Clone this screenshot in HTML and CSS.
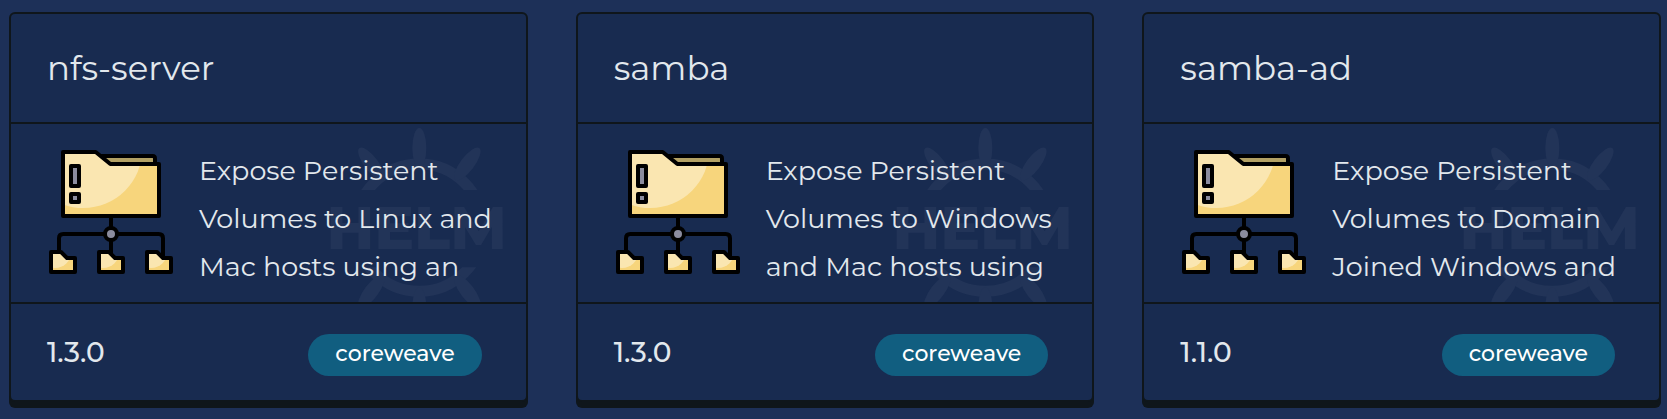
FILE: index.html
```html
<!DOCTYPE html>
<html lang="en">
<head>
<meta charset="utf-8">
<title>Charts</title>
<link rel="stylesheet" href="styles.css">
</head>
<body>
<svg class="defs" aria-hidden="true">
  <defs>
    <clipPath id="front"><path d="M69 51H167L211 87H357V243H69Z"/></clipPath>
    <clipPath id="small-front"><path d="M33 351H63L81 369H105V411H33Z"/></clipPath>
    <symbol id="small-folder" viewBox="27 345 84 72">
      <path d="M33 351H63L81 369H105V411H33Z" fill="#f7d57c"/>
      <ellipse cx="45" cy="353" rx="48" ry="46" fill="#fae6b1" clip-path="url(#small-front)"/>
      <path d="M33 351H63L81 369H105V411H33Z" fill="none" stroke="#000" stroke-width="12" stroke-linejoin="round"/>
    </symbol>
    <symbol id="share" viewBox="27 45 372 372">
      <path d="M175 63H338Q345 63 345 71V90H205Z" fill="#b3a164" stroke="#000" stroke-width="12"/>
      <path d="M69 51H167L211 87H357V243H69Z" fill="#f7d57c"/>
      <circle cx="130" cy="42" r="177" fill="#fae6b1" clip-path="url(#front)"/>
      <path d="M69 51H167L211 87H357V243H69Z" fill="none" stroke="#000" stroke-width="12" stroke-linejoin="round"/>
      <path d="M93 93H117V153H93ZM93 177H117V201H93Z" fill="#8b8c9e" stroke="#000" stroke-width="12" stroke-linejoin="round"/>
      <path d="M213 243V360M57 350V310Q57 297 70 297H356Q369 297 369 310V365" fill="none" stroke="#000" stroke-width="12"/>
      <circle cx="213" cy="297" r="18" fill="#8b8c9e" stroke="#000" stroke-width="12"/>
      <use href="#small-folder" x="27" y="345" width="84" height="72"/>
      <use href="#small-folder" x="171" y="345" width="84" height="72"/>
      <use href="#small-folder" x="315" y="345" width="84" height="72"/>
    </symbol>
    <clipPath id="rim"><path d="M0 0H720V225H0ZM0 457H720V700H0Z"/></clipPath>
    <symbol id="helm" viewBox="78 27 540 534">
      <g clip-path="url(#rim)">
        <circle cx="358" cy="338" r="191" fill="none" stroke="#223458" stroke-width="33"/>
        <g fill="#223458">
          <ellipse cx="358" cy="99" rx="21" ry="60"/>
          <ellipse cx="358" cy="99" rx="21" ry="60" transform="rotate(37 358 338)"/>
          <ellipse cx="358" cy="99" rx="21" ry="60" transform="rotate(-37 358 338)"/>
          <ellipse cx="358" cy="99" rx="21" ry="60" transform="rotate(143 358 338)"/>
          <ellipse cx="358" cy="99" rx="21" ry="60" transform="rotate(-143 358 338)"/>
          <ellipse cx="358" cy="99" rx="21" ry="60" transform="rotate(180 358 338)"/>
        </g>
      </g>
      <text class="helm-word" x="350" y="403" text-anchor="middle">HELM</text>
    </symbol>
  </defs>
</svg>
<main class="charts">
  <article class="card">
    <h2 class="card-title">nfs-server</h2>
    <div class="card-body">
      <svg class="watermark" aria-hidden="true"><use href="#helm"/></svg>
      <svg class="icon" aria-hidden="true"><use href="#share"/></svg>
      <p class="description">Expose Persistent Volumes to Linux and Mac hosts using an</p>
    </div>
    <footer class="card-footer"><span class="version">1.3.0</span><span class="badge">coreweave</span></footer>
  </article>
  <article class="card">
    <h2 class="card-title">samba</h2>
    <div class="card-body">
      <svg class="watermark" aria-hidden="true"><use href="#helm"/></svg>
      <svg class="icon" aria-hidden="true"><use href="#share"/></svg>
      <p class="description">Expose Persistent Volumes to Windows and Mac hosts using</p>
    </div>
    <footer class="card-footer"><span class="version">1.3.0</span><span class="badge">coreweave</span></footer>
  </article>
  <article class="card">
    <h2 class="card-title">samba-ad</h2>
    <div class="card-body">
      <svg class="watermark" aria-hidden="true"><use href="#helm"/></svg>
      <svg class="icon" aria-hidden="true"><use href="#share"/></svg>
      <p class="description">Expose Persistent Volumes to Domain Joined Windows and</p>
    </div>
    <footer class="card-footer"><span class="version">1.1.0</span><span class="badge">coreweave</span></footer>
  </article>
</main>
</body>
</html>
```
FILE: styles.css
```css
* { box-sizing: border-box; }
body {
  margin: 0;
  background: #1d3058;
  color: #e2e8ed;
  font-family: Metropolis, Montserrat, Inter, sans-serif;
}
.defs { position: absolute; width: 0; height: 0; }
.charts {
  display: grid;
  grid-template-columns: repeat(3, minmax(0, 1fr));
  gap: 48px;
  padding: 12px 6px 11px 9px;
}
.card {
  background: #182b50;
  border: 2px solid #0f161b;
  border-radius: 6px;
  box-shadow: 0 6px 0 #0f161b;
}
.card-title {
  margin: 0;
  padding: 30px 36px;
  font-size: 34px;
  line-height: 48px;
  font-weight: 400;
}
.card-body {
  position: relative;
  display: flex;
  gap: 24px;
  padding: 23px 24px 11px 36px;
  border-top: 2px solid #0f161b;
  border-bottom: 2px solid #0f161b;
}
.watermark {
  position: absolute;
  top: 0;
  right: 20px;
  width: 180px;
  height: 178px;
}
.helm-word { fill: #223458; font-size: 178px; font-weight: 800; }
.icon {
  flex: none;
  width: 128px;
  height: 124px;
  margin-top: 3px;
}
.description {
  position: relative;
  margin: 0;
  font-size: 27px;
  line-height: 48px;
}
.card-footer {
  display: flex;
  align-items: flex-start;
  justify-content: space-between;
  padding: 30px 44px 24px 36px;
}
.version { font-size: 28px; line-height: 36px; font-weight: 500; }
.badge {
  padding: 0 27px 2px;
  border-radius: 21px;
  background: #115e80;
  color: #fff;
  font-size: 22px;
  line-height: 40px;
  font-weight: 500;
}
```
